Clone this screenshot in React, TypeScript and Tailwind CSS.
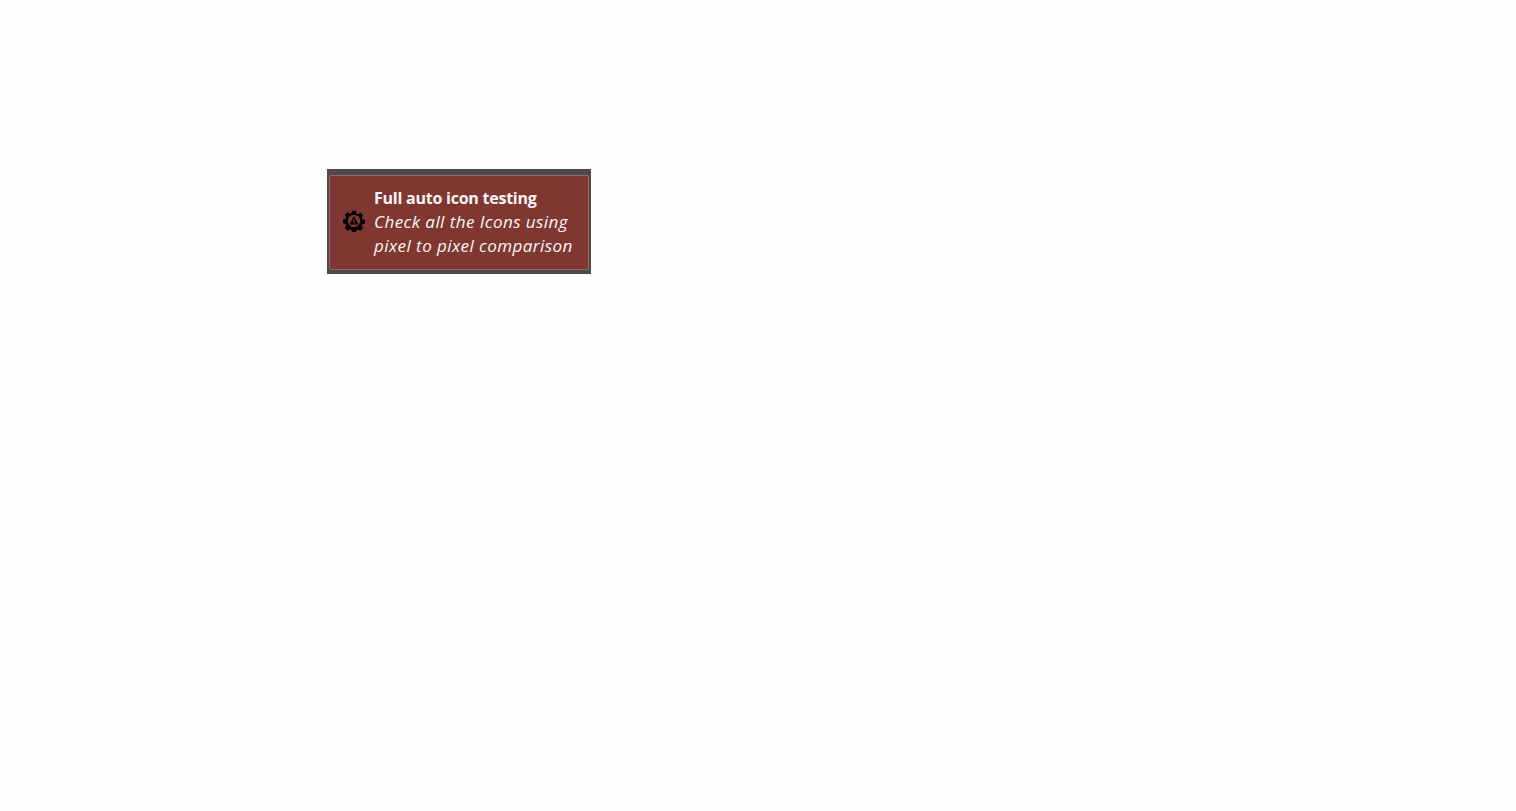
import React from 'react';

const GearWarning = () => (
  <svg width="22" height="22" viewBox="0 0 24 24" className="shrink-0 mb-[3px]">
    <path
      fill="#000"
      fillRule="evenodd"
      d="M9.8 0.8h4.4l.5 2.9 1.9.8 2.4-1.7 3.1 3.100-1.700 2.400.8 1.900 2.900.5v4.400l-2.900.5-.8 1.900 1.700 2.400-3.100 3.100-2.400-1.700-1.900.8-.5 2.900H9.800l-.5-2.900-1.900-.8L5 22.500 1.900 19.400l1.700-2.400-.8-1.900-2.900-.5v-4.400l2.900-.5.8-1.900L1.900 5.400 5 2.300l2.400 1.700 1.900-.8zM12 5.200a6.800 6.800 0 1 0 0 13.600 6.800 6.800 0 0 0 0-13.600z"
    />
    <path fill="#000" d="M12 6.800l5 9H7z" />
    <rect x="11.200" y="10" width="1.600" height="3" fill="#7e3831" />
    <rect x="11.200" y="13.800" width="1.600" height="1.200" fill="#7e3831" />
  </svg>
);

const App: React.FC = () => {
  return (
    <div className="min-h-[811px] bg-[#fefefe] pt-[169px] pl-[327px] font-['Open_Sans','Liberation_Sans',sans-serif]">
      <div className="w-[264px] h-[105px] bg-[#4b4b4d] pt-[6px] px-[2px] pb-[4px]">
        <div className="h-full flex items-center gap-[9px] pl-[13px] rounded-[2px] bg-[#7e3831] border border-[#a06660]">
          <GearWarning />
          <div className="mb-[2px] text-[16px] leading-[24px] text-[#fdf5f3] whitespace-nowrap">
            <div className="font-bold tracking-[-0.24px]">Full auto icon testing</div>
            <div className="italic text-[17px] tracking-[0.44px]">Check all the Icons using</div>
            <div className="italic text-[17px] tracking-[0.44px]">pixel to pixel comparison</div>
          </div>
        </div>
      </div>
    </div>
  );
};

export default App;
